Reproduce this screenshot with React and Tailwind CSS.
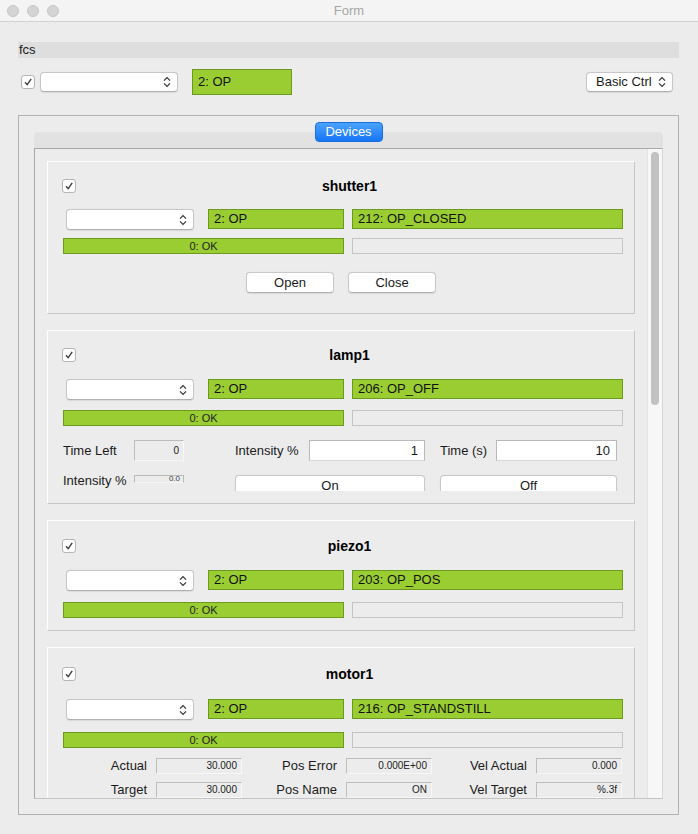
import React from "react";

const font = { fontFamily: '"Liberation Sans", Arial, sans-serif' };

function Check() {
  return (
    <div className="w-[14px] h-[14px] shrink-0 bg-white border border-[#b4b4b4] rounded-[3px] flex items-center justify-center">
      <svg width="10" height="10" viewBox="0 0 10 10">
        <path d="M2 5.2 L4.2 7.6 L8.2 1.8" fill="none" stroke="#3a3a3a" strokeWidth="1.3" />
      </svg>
    </div>
  );
}

function UpDown() {
  return (
    <svg width="8" height="12" viewBox="0 0 8 12" className="shrink-0">
      <path d="M1 4.6 L4 1.6 L7 4.6" fill="none" stroke="#333" strokeWidth="1.2" />
      <path d="M1 7.4 L4 10.4 L7 7.4" fill="none" stroke="#333" strokeWidth="1.2" />
    </svg>
  );
}

function Combo({ className = "", children }) {
  return (
    <div
      className={`bg-white border border-[#c6c6c6] border-b-[#b0b0b0] rounded-[4px] flex items-center justify-between pl-[9px] pr-[6px] text-[13px] text-[#1a1a1a] shadow-[0_0.5px_1px_rgba(0,0,0,0.08)] ${className}`}
    >
      <span>{children}</span>
      <UpDown />
    </div>
  );
}

function Green({ className = "", children }) {
  return (
    <div
      className={`bg-[#9acd32] border border-[#6c9a1f] flex items-center pl-[5px] text-[13px] text-[#111] ${className}`}
    >
      {children}
    </div>
  );
}

function Readout({ className = "", children }) {
  return (
    <div
      className={`bg-[#ececec] border border-[#bdbdbd] border-b-[#f7f7f7] border-r-[#f7f7f7] flex items-center justify-end pr-[4px] text-[10px] text-[#222] leading-none ${className}`}
    >
      {children}
    </div>
  );
}

function Button({ className = "", children }) {
  return (
    <div
      className={`bg-white border border-[#c8c8c8] border-b-[#b2b2b2] rounded-[4px] flex items-center justify-center text-[13px] text-[#1a1a1a] shadow-[0_0.5px_1px_rgba(0,0,0,0.08)] ${className}`}
    >
      {children}
    </div>
  );
}

function DeviceCard({ name, state, pt, comboMt, progMt, pb, children }) {
  return (
    <div
      className="shrink-0 border border-white border-r-[#c6c6c6] border-b-[#c6c6c6] pl-[15px] pr-[11px]"
      style={{ paddingTop: pt, paddingBottom: pb }}
    >
      <div className="flex items-center h-[14px]">
        <div className="-ml-px">
          <Check />
        </div>
        <div className="flex-1 text-center text-[14px] font-bold text-black">{name}</div>
      </div>
      <div className="flex items-start" style={{ marginTop: comboMt }}>
        <Combo className="ml-[3px] w-[128px] h-[21px]" />
        <Green className="ml-[14px] w-[136px] h-[20px]">2: OP</Green>
        <Green className="ml-[8px] flex-1 h-[20px]">{state}</Green>
      </div>
      <div className="flex items-start" style={{ marginTop: progMt }}>
        <div className="w-[281px] h-[16px] bg-[#9acd32] border border-[#6c9a1f] flex items-center justify-center text-[11px] text-[#222]">
          0: OK
        </div>
        <div className="ml-[8px] flex-1 h-[16px] bg-[#ececec] border border-[#c4c4c4]" />
      </div>
      {children}
    </div>
  );
}

export default function App() {
  return (
    <div className="w-[698px] h-[834px] bg-[#ececec] overflow-hidden flex flex-col" style={font}>
      {/* Title bar */}
      <div className="h-[22px] shrink-0 bg-[#f4f4f4] border-b border-[#d2d2d2] flex items-center relative">
        <div className="flex gap-[8px] pl-[7px]">
          <div className="w-[12px] h-[12px] rounded-full bg-[#d4d4d4] border border-[#c6c6c6]" />
          <div className="w-[12px] h-[12px] rounded-full bg-[#d4d4d4] border border-[#c6c6c6]" />
          <div className="w-[12px] h-[12px] rounded-full bg-[#d4d4d4] border border-[#c6c6c6]" />
        </div>
        <div className="absolute left-0 right-0 text-center text-[13px] text-[#a6a6a6]">Form</div>
      </div>

      {/* Body */}
      <div className="pl-[18px] pr-[19px] pt-[20px] flex flex-col">
        <div className="h-[16px] bg-[#dedede] flex items-center pl-[1px] text-[13px] text-[#1a1a1a]">fcs</div>

        <div className="mt-[11px] h-[26px] flex items-center">
          <div className="ml-[3px]">
            <Check />
          </div>
          <Combo className="ml-[5px] w-[138px] h-[20px]" />
          <Green className="ml-[14px] w-[100px] h-[26px] border-[#5f8e15]">2: OP</Green>
          <Combo className="ml-auto mr-[6px] w-[87px] h-[20px]">Basic Ctrl</Combo>
        </div>

        {/* Outer frame */}
        <div className="mt-[20px] h-[700px] border border-[#b2b2b2] px-[15px] pt-[6px] flex flex-col">
          <div className="flex flex-col items-center">
            <div className="relative z-10 -mb-[10px] w-[68px] h-[20px] rounded-[4px] bg-gradient-to-b from-[#4ba2fd] to-[#1475f6] border border-[#1a6fe0] flex items-center justify-center text-[13px] text-white">
              Devices
            </div>
            <div className="self-stretch h-[16px] bg-[#e2e2e2] rounded-t-[4px]" />
          </div>

          {/* Tab pane */}
          <div className="h-[651px] border border-[#a9a9a9] border-r-[#d6d6d6] border-b-[#c4c4c4] flex overflow-hidden">
            <div className="flex-1 overflow-hidden pl-[12px] pr-[12px] pt-[12px] flex flex-col gap-[16px]">
              <DeviceCard name="shutter1" state="212: OP_CLOSED" pt={17} comboMt={16} progMt={8} pb={20}>
                <div className="flex mt-[18px]">
                  <Button className="ml-[183px] w-[88px] h-[21px]">Open</Button>
                  <Button className="ml-[14px] w-[88px] h-[21px]">Close</Button>
                </div>
              </DeviceCard>

              <DeviceCard name="lamp1" state="206: OP_OFF" pt={17} comboMt={17} progMt={10} pb={12}>
                <div className="mt-[14px] h-[51px] overflow-hidden">
                  <div className="flex items-center h-[21px] text-[13px] text-[#1a1a1a]">
                    <div className="w-[71px]">Time Left</div>
                    <Readout className="w-[50px] h-[21px]">0</Readout>
                    <div className="ml-[51px] w-[74px]">Intensity %</div>
                    <div className="w-[116px] h-[21px] bg-white border border-[#b9b9b9] border-b-[#d8d8d8] flex items-center justify-end pr-[6px]">
                      1
                    </div>
                    <div className="ml-[15px] w-[56px]">Time (s)</div>
                    <div className="w-[121px] h-[21px] bg-white border border-[#b9b9b9] border-b-[#d8d8d8] flex items-center justify-end pr-[6px]">
                      10
                    </div>
                  </div>
                  <div className="flex items-start mt-[10px] text-[13px] text-[#1a1a1a]">
                    <div className="w-[71px] leading-[16px] mt-[2px]">Intensity %</div>
                    <div className="w-[50px] h-[8px] mt-[4px] bg-[#ececec] border border-[#b9b9b9] border-b-[#f5f5f5] overflow-hidden flex items-center justify-end pr-[3px] text-[8px] leading-none text-[#444]">
                      0.0
                    </div>
                    <Button className="ml-[51px] mt-[4px] w-[190px] h-[22px]">On</Button>
                    <Button className="ml-[15px] mt-[4px] w-[177px] h-[22px]">Off</Button>
                  </div>
                </div>
              </DeviceCard>

              <DeviceCard name="piezo1" state="203: OP_POS" pt={18} comboMt={17} progMt={11} pb={12} />

              <DeviceCard name="motor1" state="216: OP_STANDSTILL" pt={19} comboMt={18} progMt={12} pb={12}>
                <div className="mt-[10px] grid grid-cols-[179px_179px_179px] gap-x-[11px] gap-y-[8px] text-[13px] text-[#1a1a1a]">
                  <div className="flex items-center justify-end gap-[9px] h-[16px]">
                    <span>Actual</span>
                    <Readout className="w-[86px] h-[16px]">30.000</Readout>
                  </div>
                  <div className="flex items-center justify-end gap-[9px] h-[16px]">
                    <span>Pos Error</span>
                    <Readout className="w-[86px] h-[16px]">0.000E+00</Readout>
                  </div>
                  <div className="flex items-center justify-end gap-[9px] h-[16px]">
                    <span>Vel Actual</span>
                    <Readout className="w-[86px] h-[16px]">0.000</Readout>
                  </div>
                  <div className="flex items-center justify-end gap-[9px] h-[16px]">
                    <span>Target</span>
                    <Readout className="w-[86px] h-[16px]">30.000</Readout>
                  </div>
                  <div className="flex items-center justify-end gap-[9px] h-[16px]">
                    <span>Pos Name</span>
                    <Readout className="w-[86px] h-[16px]">ON</Readout>
                  </div>
                  <div className="flex items-center justify-end gap-[9px] h-[16px]">
                    <span>Vel Target</span>
                    <Readout className="w-[86px] h-[16px]">%.3f</Readout>
                  </div>
                </div>
              </DeviceCard>
            </div>

            {/* Scrollbar */}
            <div className="w-[15px] shrink-0 bg-[#f7f7f7] border-l border-[#e4e4e4] pt-[3px] pl-[3px]">
              <div className="w-[8px] h-[253px] rounded-full bg-[#c2c2c2]" />
            </div>
          </div>
        </div>
      </div>
    </div>
  );
}
